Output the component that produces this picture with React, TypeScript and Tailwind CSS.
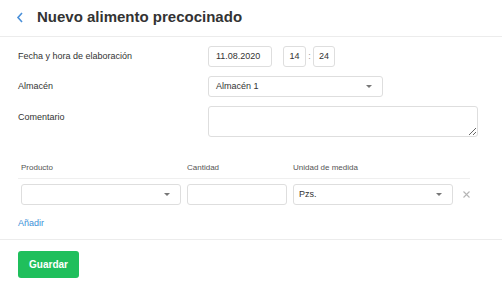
export default function App() {
  const caret = (
    <svg width="6" height="3" viewBox="0 0 6 3" className="shrink-0">
      <path d="M0 0h6L3 3z" fill="#777" />
    </svg>
  );

  return (
    <div
      className="w-[502px] h-[302px] bg-white text-[#333] overflow-hidden"
      style={{ fontFamily: '"Liberation Sans", Arial, sans-serif' }}
    >
      {/* header */}
      <div className="h-[37px] border-b border-[#ececec] flex items-center pl-[16px]">
        <svg width="8" height="11" viewBox="0 0 8 11" className="mt-[-2px]">
          <path d="M6 1L2 5.5 6 10" stroke="#4a90d9" strokeWidth="1.6" fill="none" />
        </svg>
        <h1 className="ml-[13px] text-[15px] font-bold text-[#333] mt-[-1px]">Nuevo alimento precocinado</h1>
      </div>

      <div className="px-[18px] pt-[9px]">
        <div className="flex flex-col gap-[9px]">
          <div className="flex items-center">
            <div className="w-[190px] text-[9px]">Fecha y hora de elaboración</div>
            <div className="w-[64px] h-[21px] border border-[#dedede] rounded-[3px] flex items-center px-[7px] text-[9px]">11.08.2020</div>
            <div className="ml-[11px] w-[23px] h-[21px] border border-[#dedede] rounded-[3px] flex items-center justify-center text-[9px]">14</div>
            <div className="w-[7px] text-center text-[9px] text-[#999]">:</div>
            <div className="w-[22px] h-[21px] border border-[#dedede] rounded-[3px] flex items-center justify-center text-[9px]">24</div>
          </div>
          <div className="flex items-center">
            <div className="w-[190px] text-[9px]">Almacén</div>
            <div className="w-[175px] h-[21px] border border-[#dedede] rounded-[3px] flex items-center justify-between pl-[7px] pr-[10px] text-[9px]">
              <span>Almacén 1</span>
              {caret}
            </div>
          </div>
          <div className="flex items-start">
            <div className="w-[190px] text-[9px] pt-[5px]">Comentario</div>
            <textarea className="w-[270px] h-[31px] border border-[#dedede] rounded-[3px] outline-none" />
          </div>
        </div>

        {/* product table */}
        <div className="mt-[20px] w-[452px]">
          <div className="h-[22px] border-b border-[#efefef] flex items-center pl-[3px] text-[8px] text-[#555]">
            <div className="w-[166px]">Producto</div>
            <div className="w-[106px]">Cantidad</div>
            <div>Unidad de medida</div>
          </div>
          <div className="pt-[5px] pl-[3px] flex items-center gap-[6px]">
            <div className="w-[160px] h-[21px] border border-[#dedede] rounded-[3px] flex items-center justify-end pr-[10px]">
              {caret}
            </div>
            <div className="w-[100px] h-[21px] border border-[#dedede] rounded-[3px]" />
            <div className="w-[160px] h-[21px] border border-[#dedede] rounded-[3px] flex items-center justify-between pl-[5px] pr-[10px] text-[9px]">
              <span>Pzs.</span>
              {caret}
            </div>
            <svg width="7" height="7" viewBox="0 0 7 7" className="ml-[4px]">
              <path d="M0.5 0.5l6 6M6.5 0.5l-6 6" stroke="#b5b5b5" strokeWidth="1.1" />
            </svg>
          </div>
        </div>

        <div className="mt-[13px] text-[9px] text-[#3d8fd8] leading-[11px]">Añadir</div>
      </div>

      <div className="mt-[10px] border-t border-[#ececec] px-[18px] pt-[11px]">
        <button className="w-[61px] h-[27px] bg-[#1fbf5c] rounded-[3px] text-white text-[10px] font-bold">Guardar</button>
      </div>
    </div>
  );
}
